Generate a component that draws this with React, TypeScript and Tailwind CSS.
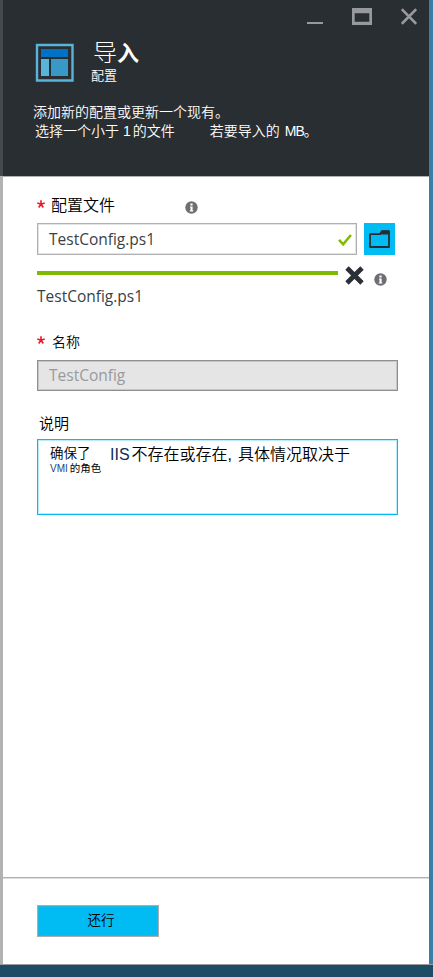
import React from "react";

const cjk = "font-['Liberation_Sans','Noto_Sans_CJK_SC',sans-serif]";
const cjkThin = "font-['Liberation_Sans','Noto_Sans_CJK_SC',sans-serif] font-[350]";
const latin = "font-['Open_Sans','Noto_Sans',sans-serif]";

function InfoIcon({ className = "" }: { className?: string }) {
  return (
    <svg className={`h-[13px] w-[13px] shrink-0 ${className}`} viewBox="0 0 13 13">
      <circle cx="6.5" cy="6.5" r="6.2" fill="#6d6f75" />
      <path d="M5.4 2.6h2.2v1.8H5.4zM5 5.4h2.6v4h.7v1.2H4.7V9.4h.8V6.5H5z" fill="#fff" />
    </svg>
  );
}

function Required() {
  return (
    <svg className="-mt-[4px] h-[8px] w-[8px] shrink-0" viewBox="0 0 8 8" fill="none" stroke="#e8182d" strokeWidth="1.6">
      <path d="M4 4.2V.2M4 4.2L.3 3.1M4 4.2l3.7-1.1M4 4.2L1.7 7.5M4 4.2l2.3 3.3" />
    </svg>
  );
}

function Header() {
  return (
    <header className="h-[177px] shrink-0 border-b border-[#b0b0b0] bg-[#292e32] text-white">
      <div className="flex h-[42px] items-start justify-end pr-[12px] pt-[8px]">
        <svg className="mr-[29px] h-[17px] w-4" viewBox="0 0 16 17">
          <path d="M0 14h16v2H0z" fill="#98999c" />
        </svg>
        <svg className="mr-[29px] h-[17px] w-5" viewBox="0 0 20 17">
          <path d="M0 0h20v17H0zM2.7 5.2v8.6h14.6V5.2z" fill="#98999c" fillRule="evenodd" />
        </svg>
        <svg className="h-[17px] w-4" viewBox="0 0 16 17">
          <path d="M.8 1.2l14.4 14.6M15.2 1.2L.8 15.8" stroke="#98999c" strokeWidth="2.6" />
        </svg>
      </div>
      <div className="flex h-[61px] pl-[32px]">
        <svg className="mt-px h-[39px] w-[39px]" viewBox="0 0 39 39">
          <path d="M2 2h35.5v35.5H2z" fill="none" stroke="#59b4d9" strokeWidth="2.4" />
          <path d="M6 6h27v8H6z" fill="#0072c6" />
          <path d="M6 16h8v17H6z" fill="#59b4d9" />
          <path d="M16 16h17v17H16z" fill="#3999c6" />
        </svg>
        <div className="ml-[17px] whitespace-nowrap">
          <h1 className="-mt-px pl-[2px] text-[24px] font-light leading-[24px]">
            导<span className="text-[22px] font-bold">入</span>
          </h1>
          <p className={`mt-[3px] text-[13px] leading-[14px] ${cjkThin}`}>配置</p>
        </div>
      </div>
      <div className={`whitespace-nowrap pl-[30px] text-[14px] leading-[19px] ${cjkThin}`}>
        <p>添加新的配置或更新一个现有。</p>
        <div className="flex pl-[2px]">
          <span>选择一个小于</span>
          <span className="ml-[4px]">1</span>
          <span className="ml-[2px]">的文件</span>
          <span className="ml-[35px]">若要导入的</span>
          <span className="ml-[5px] w-[19px] tracking-[-1px]">MB</span>
          <span>。</span>
        </div>
      </div>
    </header>
  );
}

export default function App() {
  return (
    <div className={`flex h-[977px] w-[433px] flex-col bg-[#1d4d66] ${cjk}`}>
      <div className="flex h-[964px] shrink-0">
        <div className="w-[3px] shrink-0 bg-[#b2b2b2]">
          <div className="h-[176px] bg-[#44494d]" />
        </div>
        <div className="flex w-[426px] shrink-0 flex-col bg-white text-black">
          <Header />
          <main className="flex h-[700px] shrink-0 flex-col whitespace-nowrap pl-[34px]">
            <div className="mt-[19px] flex h-[20px] items-center">
              <Required />
              <span className={`ml-[6px] text-[16px] leading-[20px] ${cjkThin}`}>配置文件</span>
              <InfoIcon className="ml-[70px] mt-[3px]" />
            </div>
            <div className="mt-[7px] flex h-[32px]">
              <div className={`flex w-[320px] items-center justify-between border border-[#b0b0b0] pl-[11px] pr-[4px] text-[15.5px] text-[#3a3f45] shadow-[inset_0_0_0_1px_#e3e3e3] ${latin}`}>
                <span className="mt-[2px]">TestConfig.ps1</span>
                <svg className="mt-px h-[12px] w-[14px]" viewBox="0 0 14 12">
                  <path d="M1 5.8l4.2 4.5L12.9 1" fill="none" stroke="#7fba00" strokeWidth="2.5" />
                </svg>
              </div>
              <button className="ml-[7px] flex w-[31px] items-center justify-center bg-[#00bcf2]">
                <svg className="h-[18px] w-[21px]" viewBox="0 0 21 18">
                  <path d="M1 4.2h10L13 1.2h7V17H1z" fill="none" stroke="#292e36" strokeWidth="1.8" strokeLinejoin="round" />
                  <path d="M10 4.5L12.5.5H20l.5 4z" fill="#292e36" />
                </svg>
              </button>
            </div>
            <div className="mt-[10px] flex h-[22px] items-start">
              <div className="mt-[6px] h-[4px] w-[301px] bg-[#7fba00]" />
              <svg className="ml-[7px] mt-px h-[19px] w-[19px]" viewBox="0 0 19 19">
                <path d="M2 2l15 15M17 2L2 17" stroke="#2b3037" strokeWidth="4.8" />
              </svg>
              <InfoIcon className="ml-[10px] mt-[8px]" />
            </div>
            <p className={`h-[18px] text-[15.5px] leading-[18px] text-[#3a3f45] ${latin}`}>TestConfig.ps1</p>
            <div className="mt-[27px] flex h-[20px] items-center">
              <Required />
              <span className={`ml-[7px] text-[14px] leading-[20px] ${cjkThin}`}>名称</span>
            </div>
            <div className={`mt-[8px] flex h-[31px] w-[361px] items-center border border-[#8f8f8f] bg-[#e5e5e5] pl-[11px] text-[15.5px] text-[#989a9d] shadow-[inset_0_0_0_1px_#c6c6c6] ${latin}`}>
              TestConfig
            </div>
            <p className={`mt-[23px] h-[20px] pl-[2px] text-[15px] leading-[20px] ${cjkThin}`}>说明</p>
            <div className="mt-[5px] flex h-[76px] w-[361px] border border-[#00bcf2] pl-[12px] pt-[5px] shadow-[inset_0_0_0_1px_#b8ecfa]">
              <div className={`w-[60px] ${cjkThin}`}>
                <p className="text-[13.5px] leading-[18px]">确保了</p>
                <p className="flex text-[10px] leading-[11px]">
                  <span className="text-[#1e4478]">VMI</span>
                  <span className="ml-[2px] text-[10.5px] font-normal">的角色</span>
                </p>
              </div>
              <p className={`flex text-[16px] leading-[19px] ${cjkThin}`}>
                <span className="text-[#0c2b58]">IIS</span>
                <span className="ml-[2px]">不存在或存在,</span>
                <span className="ml-[6px]">具体情况取决于</span>
              </p>
            </div>
          </main>
          <footer className="flex h-[87px] shrink-0 border-t border-[#b0b0b0] pl-[34px] pt-[27px] shadow-[inset_0_1px_0_0_#dedede]">
            <button className={`flex h-[32px] w-[122px] items-center justify-center border border-[#a9adb0] bg-[#00bcf2] pl-[6px] text-[13.5px] leading-[16px] shadow-[inset_0_0_0_1px_#25b4dc] ${cjkThin}`}>
              还行
            </button>
          </footer>
        </div>
        <div className="w-[4px] shrink-0 bg-[#387fa8]" />
      </div>
      <div className="h-px shrink-0 bg-[#999b9c]" />
    </div>
  );
}
